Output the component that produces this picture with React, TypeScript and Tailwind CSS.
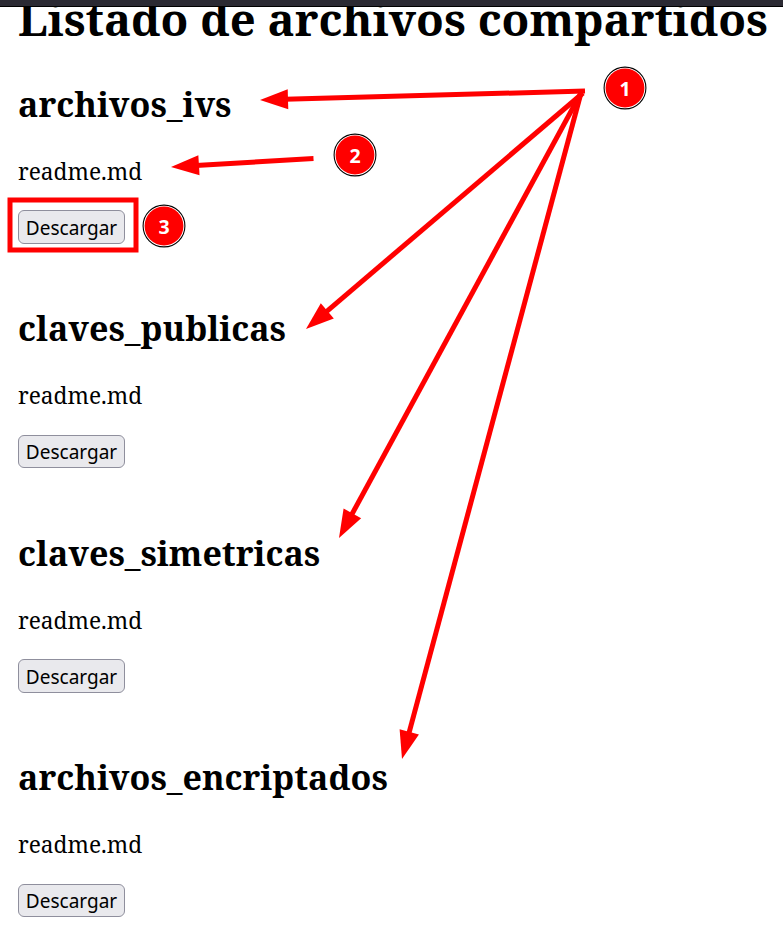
const folders = ["archivos_ivs", "claves_publicas", "claves_simetricas", "archivos_encriptados"];

const arrows = [
  { x1: 585, y1: 91, x2: 260, y2: 100 },
  { x1: 583, y1: 93, x2: 306, y2: 329 },
  { x1: 581, y1: 93, x2: 339, y2: 538 },
  { x1: 581, y1: 93, x2: 402, y2: 759 },
  { x1: 313.5, y1: 158.5, x2: 171, y2: 167 },
];

function Arrow({ x1, y1, x2, y2 }: { x1: number; y1: number; x2: number; y2: number }) {
  const length = Math.hypot(x2 - x1, y2 - y1);
  const angle = (Math.atan2(y2 - y1, x2 - x1) * 180) / Math.PI;
  return (
    <g transform={`translate(${x1} ${y1}) rotate(${angle})`} fill="#ff0000">
      <rect x={0} y={-2.5} width={length - 25} height={5} />
      <polygon points={`${length},0 ${length - 28},-10 ${length - 28},10`} />
    </g>
  );
}

function Badge({ label, cx, cy }: { label: string; cx: number; cy: number }) {
  return (
    <g>
      <circle cx={cx} cy={cy} r={20.9} fill="#ffffff" stroke="#000000" strokeWidth={1.1} />
      <circle cx={cx} cy={cy} r={19.4} fill="#ff0000" />
      <text
        x={cx}
        y={cy + 7.5}
        textAnchor="middle"
        fill="#ffffff"
        className="font-['Open_Sans',sans-serif] text-[19.5px] font-bold"
      >
        {label}
      </text>
    </g>
  );
}

export default function App() {
  return (
    <div className="relative h-[936px] w-[783px] overflow-hidden bg-white font-['Noto_Serif','DejaVu_Serif_Condensed','DejaVu_Serif',serif] text-black">
      <div className="h-[7px] border-b border-black bg-[#2b2a33]" />
      <main className="h-[929px] overflow-hidden pl-[18px]">
        <h1 className="-mt-[13px] mb-[43.7px] h-12 w-max text-[45.4px] leading-[48px] font-bold whitespace-nowrap">
          Listado de archivos compartidos
        </h1>
        {folders.map((name) => (
          <section key={name} className="flex h-[224.5px] flex-col items-start">
            <h2 className="mb-[38px] h-9 text-[34.05px] leading-9 font-bold whitespace-nowrap">{name}</h2>
            <p className="mb-[26.7px] h-6 text-[22.7px] leading-6">readme.md</p>
            <button className="flex h-[33.4px] w-[107px] items-center justify-center rounded-[6px] border border-[#8f8f9d] bg-[#e9e9ed] pt-[2.2px] font-['Noto_Sans',sans-serif] text-[19px] leading-none">
              Descargar
            </button>
          </section>
        ))}
      </main>
      <svg className="absolute inset-0" width="783" height="936" viewBox="0 0 783 936">
        <rect x={10} y={200} width={126} height={50} fill="none" stroke="#ff0000" strokeWidth={5} />
        {arrows.map((arrow) => (
          <Arrow key={`${arrow.x2}-${arrow.y2}`} {...arrow} />
        ))}
        <Badge label="1" cx={625} cy={88} />
        <Badge label="2" cx={355} cy={155} />
        <Badge label="3" cx={164} cy={226} />
      </svg>
    </div>
  );
}
